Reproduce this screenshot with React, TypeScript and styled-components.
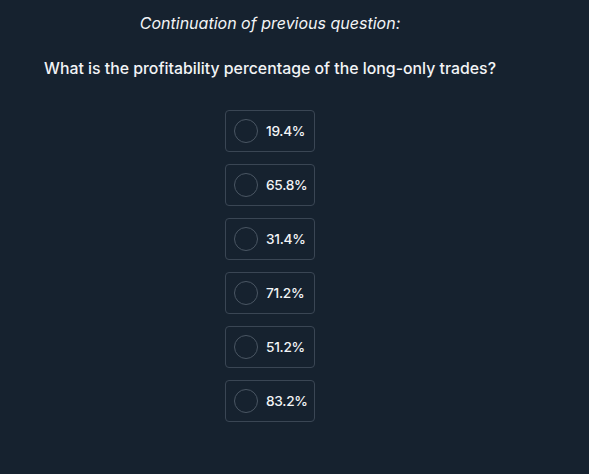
import { createGlobalStyle } from "styled-components"
import styled from "styled-components"

const GlobalStyle = createGlobalStyle`
    html, body {
        margin: 0;
        padding: 0;
        background: #16222f;
    }
    body {
        font-family: Inter, "Noto Sans", sans-serif;
        color: #f2f4f6;
    }
`

const Page = styled.div`
    width: 540px;
    min-height: 474px;
    display: flex;
    flex-direction: column;
    align-items: center;
`

const Intro = styled.h2`
    margin: 13px 0 0;
    font-size: 16px;
    font-weight: 400;
    font-style: italic;
    line-height: 20px;
`

const Question = styled.h1`
    margin: 26px 0 0;
    font-size: 15.85px;
    font-weight: 500;
    line-height: 20px;
`

const Options = styled.div`
    margin-top: 31px;
    display: flex;
    flex-direction: column;
    gap: 12px;
`

const Option = styled.label`
    box-sizing: border-box;
    width: 90px;
    height: 42px;
    display: flex;
    align-items: center;
    padding-left: 8px;
    border: 1px solid #3a4654;
    border-radius: 4px;
    cursor: pointer;
    font-size: 13.7px;
    font-weight: 500;
    letter-spacing: -0.3px;
`

const Radio = styled.span`
    box-sizing: border-box;
    width: 24px;
    height: 24px;
    border-radius: 50%;
    border: 1px solid #4a5663;
    margin-right: 8px;
    flex-shrink: 0;
`

const answers = ["19.4%", "65.8%", "31.4%", "71.2%", "51.2%", "83.2%"]

export default function App() {
    return <>
        <GlobalStyle />
        <Page>
            <Intro>Continuation of previous question:</Intro>
            <Question>What is the profitability percentage of the long-only trades?</Question>
            <Options>
                {answers.map(a => <Option key={a}><Radio />{a}</Option>)}
            </Options>
        </Page>
    </>
}
